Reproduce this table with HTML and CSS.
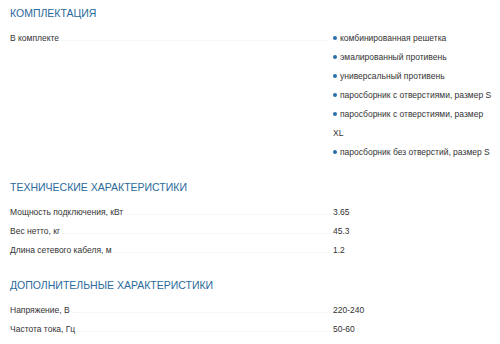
FILE: index.html
```html
<!DOCTYPE html>
<html lang="ru">
<head>
<meta charset="utf-8">
<link rel="stylesheet" href="styles.css">
</head>
<body>
<section class="group">
  <h2 class="title">КОМПЛЕКТАЦИЯ</h2>
  <div class="row">
    <div class="label"><span>В комплекте</span></div>
    <ul class="value list">
      <li>комбинированная решетка</li>
      <li>эмалированный противень</li>
      <li>универсальный противень</li>
      <li>паросборник с отверстиями, размер S</li>
      <li>паросборник с отверстиями, размер XL</li>
      <li>паросборник без отверстий, размер S</li>
    </ul>
  </div>
</section>
<section class="group">
  <h2 class="title">ТЕХНИЧЕСКИЕ ХАРАКТЕРИСТИКИ</h2>
  <div class="row"><div class="label"><span>Мощность подключения, кВт</span></div><div class="value">3.65</div></div>
  <div class="row"><div class="label"><span>Вес нетто, кг</span></div><div class="value">45.3</div></div>
  <div class="row"><div class="label"><span>Длина сетевого кабеля, м</span></div><div class="value">1.2</div></div>
</section>
<section class="group">
  <h2 class="title">ДОПОЛНИТЕЛЬНЫЕ ХАРАКТЕРИСТИКИ</h2>
  <div class="row"><div class="label"><span>Напряжение, В</span></div><div class="value">220-240</div></div>
  <div class="row"><div class="label"><span>Частота тока, Гц</span></div><div class="value">50-60</div></div>
</section>
</body>
</html>
```
FILE: styles.css
```css
body {
  margin: 0;
  padding: 5px 5px 5px 10px;
  background: #fff;
  font-family: "Liberation Sans", Arial, sans-serif;
  color: #333;
}
.group {
  margin-bottom: 17px;
}
.title {
  margin: 0 0 8px;
  font-size: 10.5px;
  line-height: 16px;
  font-weight: normal;
  color: #2b6a9c;
}
.row {
  display: flex;
  font-size: 8.5px;
  line-height: 19px;
}
.label {
  width: 323px;
  flex: none;
  display: flex;
  align-items: baseline;
}
.label::after {
  content: "";
  flex: 1;
  margin: 0 3px 0 2px;
  border-bottom: 1px dotted #efefef;
}
.value {
  width: 160px;
}
.list {
  margin: 0;
  padding: 0;
  list-style: none;
}
.list li::before {
  content: "";
  display: inline-block;
  width: 4px;
  height: 4px;
  border-radius: 50%;
  background: #2a6fa8;
  margin-right: 3px;
  vertical-align: 1px;
}
```
